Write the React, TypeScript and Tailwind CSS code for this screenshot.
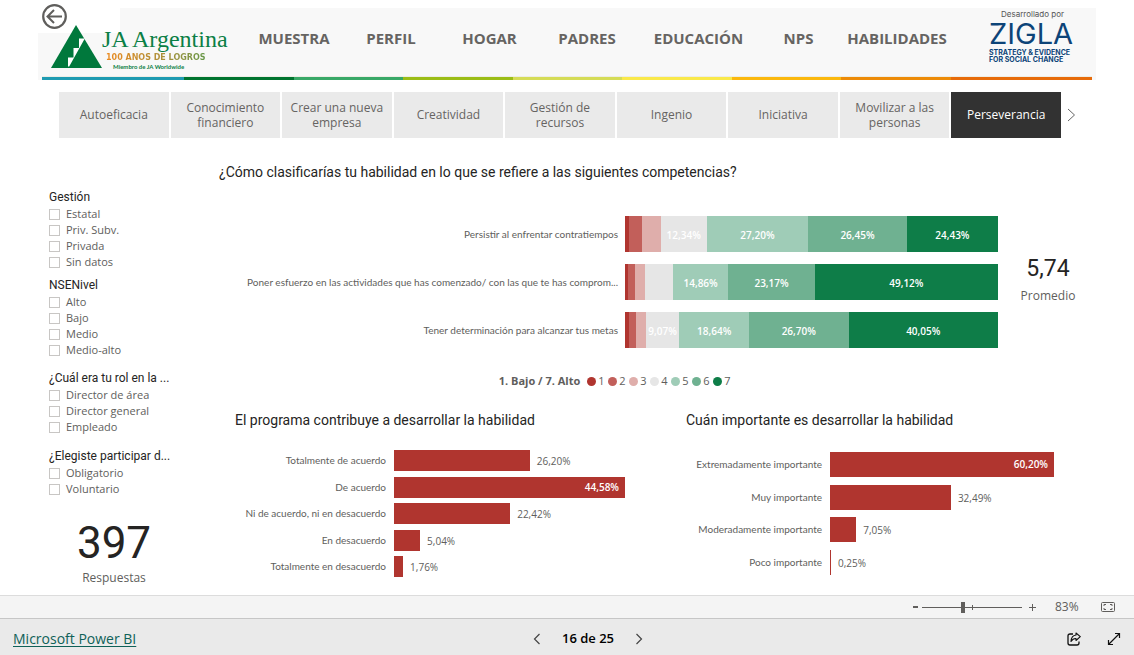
import { useState } from "react";

const UI = "font-['Open_Sans','Noto_Sans',sans-serif]";
const DIN = "font-[Roboto,sans-serif]";
const LABEL = "font-[Lato,sans-serif]";

const sections = ["MUESTRA", "PERFIL", "HOGAR", "PADRES", "EDUCACIÓN", "NPS", "HABILIDADES"];

const skills = [
  "Autoeficacia",
  "Conocimiento financiero",
  "Crear una nueva empresa",
  "Creatividad",
  "Gestión de recursos",
  "Ingenio",
  "Iniciativa",
  "Movilizar a las personas",
  "Perseverancia",
];

const scale = [
  "bg-[#b0352f]",
  "bg-[#c25f5a]",
  "bg-[#dfaeab]",
  "bg-[#e6e6e6]",
  "bg-[#9fccb7]",
  "bg-[#6fb191]",
  "bg-[#0e7d48]",
];

const competencies = [
  { label: "Persistir al enfrentar contratiempos", values: [1.01, 3.53, 5.04, 12.34, 27.2, 26.45, 24.43] },
  {
    label: "Poner esfuerzo en las actividades que has comenzado/ con las que te has comprom...",
    values: [0.76, 2.02, 2.51, 7.56, 14.86, 23.17, 49.12],
  },
  { label: "Tener determinación para alcanzar tus metas", values: [1.01, 2.01, 2.52, 9.07, 18.64, 26.7, 40.05] },
];

const contribution = [
  { label: "Totalmente de acuerdo", value: 26.2 },
  { label: "De acuerdo", value: 44.58 },
  { label: "Ni de acuerdo, ni en desacuerdo", value: 22.42 },
  { label: "En desacuerdo", value: 5.04 },
  { label: "Totalmente en desacuerdo", value: 1.76 },
];

const importance = [
  { label: "Extremadamente importante", value: 60.2 },
  { label: "Muy importante", value: 32.49 },
  { label: "Moderadamente importante", value: 7.05 },
  { label: "Poco importante", value: 0.25 },
];

const percent = (n: number) => n.toFixed(2).replace(".", ",") + "%";

function Logo() {
  return (
    <div className="flex w-[207px] shrink-0 items-start pt-[17px] pl-[13px]">
      <svg viewBox="0 0 51 44" className="h-[44px] w-[51px] shrink-0" aria-hidden="true">
        <path d="M25 0 L51 43 H0 Z" fill="#00783c" />
        <path d="M28 13.5 H33.8 L18.2 41.5 H17 V32.5 H22.5 V23 H28 Z" fill="#fff" />
      </svg>
      <div className="whitespace-nowrap">
        <div className="font-['Liberation_Serif',serif] text-[24px] leading-[28px] text-[#0b7f45]">JA Argentina</div>
        <div className="bg-linear-to-r from-[#f08a1d] via-[#a8903a] to-[#1f9a4f] bg-clip-text pl-1 font-['DejaVu_Sans',sans-serif] text-[8px] leading-[10px] font-bold text-transparent">
          100 AÑOS DE LOGROS
        </div>
        <div className="pl-[11px] font-[Lato,sans-serif] text-[6px] leading-[7px] font-bold text-[#0b7f45]">
          Miembro de JA Worldwide
        </div>
      </div>
    </div>
  );
}

function Header() {
  return (
    <header className="relative mx-[38px] mt-2 bg-[#f8f8f8]">
      <div className="absolute top-0 left-0 h-[25px] w-[82px] bg-white" />
      <button type="button" aria-label="Atrás" className="absolute -top-1 left-1">
        <svg viewBox="0 0 25 25" className="h-[25px] w-[25px]" fill="none" stroke="#5f5e5c">
          <circle cx="12.5" cy="12.5" r="11.3" strokeWidth="2.2" />
          <path d="M20 12.5 H5.5 M12 6 L5.5 12.5 L12 19" strokeWidth="2" />
        </svg>
      </button>
      <div className="pointer-events-none relative flex h-[68px]">
        <Logo />
        <nav
          className={`${UI} pointer-events-auto grid min-w-0 flex-1 grid-cols-[98fr_96fr_101fr_94fr_129fr_71fr_126fr] items-center pb-2 text-center text-[15px] font-bold text-[#666462]`}
        >
          {sections.map((s) => (
            <a key={s} href="#">
              {s}
            </a>
          ))}
        </nav>
        <div className="w-[136px] shrink-0 pl-[29px] font-[Inter,sans-serif] whitespace-nowrap text-[#0d4478]">
          <div className="pt-[2px] pl-3 text-[8px] leading-[9px] text-[#555]">Desarrollado por</div>
          <div className="text-[29px] leading-[30px]">ZIGLA</div>
          <div className="text-[7px] leading-[7px] font-bold">STRATEGY &amp; EVIDENCE</div>
          <div className="text-[7px] leading-[7px] font-bold">FOR SOCIAL CHANGE</div>
        </div>
      </div>
      <div className="mx-1 grid h-1 grid-cols-[142fr_110fr_109fr_110fr_109fr_110fr_109fr_110fr_141fr] border-t border-[#eeeee6]">
        <span className="bg-[#1f9bb2]" />
        <span className="bg-[#00742f]" />
        <span className="bg-[#38a867]" />
        <span className="bg-[#9bbd16]" />
        <span className="bg-[#d5dc56]" />
        <span className="bg-[#fae94a]" />
        <span className="bg-[#fbb80e]" />
        <span className="bg-[#ed8b08]" />
        <span className="bg-[#e76b0a]" />
      </div>
    </header>
  );
}

function SkillTabs() {
  const [active, setActive] = useState("Perseverancia");
  return (
    <div className={`${UI} mt-3 mr-[57px] ml-[59px] flex items-center gap-[5px]`}>
      <div className="grid min-w-0 flex-1 grid-cols-9 gap-[2px]">
        {skills.map((s) => (
          <button
            key={s}
            type="button"
            onClick={() => setActive(s)}
            className={
              s === active
                ? "h-[46px] bg-[#323232] px-1 pb-px text-[12px] leading-[15px] text-white"
                : "h-[46px] bg-[#eaeaea] px-1 pb-px text-[12px] leading-[15px] text-[#666462]"
            }
          >
            <span className="mx-auto block max-w-[96px]">{s}</span>
          </button>
        ))}
      </div>
      <button type="button" aria-label="Siguiente" className="w-[11px]">
        <svg viewBox="0 0 11 16" className="h-4 w-[11px]" fill="none" stroke="#666">
          <path d="M2 2 L8.5 8 L2 14" />
        </svg>
      </button>
    </div>
  );
}

function Slicer({ title, options, className = "" }: { title: string; options: string[]; className?: string }) {
  return (
    <fieldset className={className}>
      <legend className={`${DIN} h-[17px] text-[12px] leading-[16px] whitespace-nowrap text-[#252423]`}>{title}</legend>
      {options.map((o) => (
        <label key={o} className="flex h-4 items-center gap-[6px] text-[11px] text-[#605e5c]">
          <input type="checkbox" className="h-[11px] w-[11px] shrink-0 appearance-none border border-[#c8c6c4] bg-white checked:bg-[#323232]" />
          {o}
        </label>
      ))}
    </fieldset>
  );
}

function Sidebar() {
  return (
    <aside className={`${UI} w-[181px] shrink-0 pt-[51px] pl-[11px]`}>
      <Slicer title="Gestión" options={["Estatal", "Priv. Subv.", "Privada", "Sin datos"]} />
      <Slicer className="mt-[7px]" title="NSENivel" options={["Alto", "Bajo", "Medio", "Medio-alto"]} />
      <Slicer
        className="mt-3"
        title="¿Cuál era tu rol en la ..."
        options={["Director de área", "Director general", "Empleado"]}
      />
      <Slicer className="mt-[13px]" title="¿Elegiste participar d..." options={["Obligatorio", "Voluntario"]} />
      <div className="mt-5 w-[130px] text-center">
        <div className={`${DIN} text-[44px] leading-[52px] text-[#252423]`}>397</div>
        <div className="text-[12px] leading-[18px] text-[#605e5c]">Respuestas</div>
      </div>
    </aside>
  );
}

function StackedChart() {
  return (
    <div className="min-w-0 flex-1">
      <div className="flex flex-col gap-3">
        {competencies.map((c) => (
          <div key={c.label} className="grid grid-cols-[399fr_373fr] items-center gap-[7px]">
            <div className={`${LABEL} text-right text-[10px] whitespace-nowrap text-[#605e5c]`}>{c.label}</div>
            <div className="flex h-9">
              {c.values.map((v, i) => (
                <div
                  key={i}
                  style={{ width: `${v}%` }}
                  className={`${scale[i]} flex items-center justify-center pt-[2px] text-[10px] font-semibold text-white`}
                >
                  {v > 9 ? percent(v) : ""}
                </div>
              ))}
            </div>
          </div>
        ))}
      </div>
      <div className="mt-[25px] flex h-4 items-center justify-center pl-4 text-[11px] text-[#605e5c]">
        <span className="mr-[7px] font-bold">1. Bajo / 7. Alto</span>
        {scale.map((color, i) => (
          <span key={color} className="flex w-[21px] items-center gap-[2px]">
            <span className={`${color} h-[9px] w-[9px] rounded-full`} />
            {i + 1}
          </span>
        ))}
      </div>
    </div>
  );
}

function BarRows({
  data,
  rowClass,
  gridClass,
}: {
  data: { label: string; value: number }[];
  rowClass: string;
  gridClass: string;
}) {
  const max = Math.max(...data.map((d) => d.value));
  return (
    <>
      {data.map((d) => (
        <div key={d.label} className={`${gridClass} ${rowClass}`}>
          <div className={`${LABEL} mr-2 text-right text-[10px] whitespace-nowrap text-[#605e5c]`}>{d.label}</div>
          <div className="flex h-full items-center text-[10px]">
            <div
              style={{ width: `${(d.value / max) * 100}%` }}
              className="flex h-full min-w-px shrink-0 items-center justify-end bg-[#b0352f] font-semibold text-white"
            >
              {d.value === max && <span className="pr-[6px]">{percent(d.value)}</span>}
            </div>
            {d.value !== max && <span className="pt-[2px] pl-[7px] text-[#605e5c]">{percent(d.value)}</span>}
          </div>
        </div>
      ))}
    </>
  );
}

const titleClass = "font-[Roboto,sans-serif] text-[14px] leading-[20px] whitespace-nowrap text-[#252423]";

function Charts() {
  return (
    <main className={`${UI} min-w-0 flex-1 pt-6`}>
      <h2 className={titleClass}>¿Cómo clasificarías tu habilidad en lo que se refiere a las siguientes competencias?</h2>
      <div className="mt-[34px] flex">
        <StackedChart />
        <div className="w-[98px] shrink-0 pt-[38px] pl-[2px] text-center">
          <div className={`${DIN} text-[23px] leading-[30px] text-[#252423]`}>5,74</div>
          <div className="pt-[3px] text-[12px] leading-[18px] text-[#605e5c]">Promedio</div>
        </div>
      </div>
      <div className="mt-[21px] grid grid-cols-[451fr_426fr]">
        <section className="pl-4">
          <h2 className={titleClass}>El programa contribuye a desarrollar la habilidad</h2>
          <div className="mt-5 flex h-[127px] flex-col justify-between">
            <BarRows data={contribution} rowClass="h-[21px]" gridClass="grid grid-cols-[159fr_231fr_45fr] items-center" />
          </div>
        </section>
        <section className="pl-4">
          <h2 className={titleClass}>Cuán importante es desarrollar la habilidad</h2>
          <div className="mt-[22px] flex h-[123px] flex-col justify-between">
            <BarRows data={importance} rowClass="h-[25px]" gridClass="grid grid-cols-[144fr_224fr_42fr] items-center" />
          </div>
        </section>
      </div>
    </main>
  );
}

function ZoomBar() {
  return (
    <div className="flex h-[23px] items-center justify-end border-t border-[#dcdcdc] bg-[#f4f4f4] pr-[19px] text-[12px] text-[#605e5c]">
      <button type="button" aria-label="Alejar" className="w-[9px] text-left">
        <span className="block h-[2px] w-[5px] bg-[#605e5c]" />
      </button>
      <div className="relative flex w-[100px] items-center">
        <input
          type="range"
          aria-label="Zoom"
          min={10}
          max={190}
          defaultValue={83}
          className="h-3 w-full appearance-none bg-[linear-gradient(#605e5c,#605e5c)] bg-[length:100%_1px] bg-center bg-no-repeat [&::-webkit-slider-thumb]:h-[11px] [&::-webkit-slider-thumb]:w-1 [&::-webkit-slider-thumb]:appearance-none [&::-webkit-slider-thumb]:bg-[#605e5c]"
        />
        <span className="absolute left-1/2 h-[5px] w-px bg-[#605e5c]" />
      </div>
      <button type="button" aria-label="Acercar" className="ml-[6px]">
        <svg viewBox="0 0 9 9" className="h-[9px] w-[9px]" stroke="#605e5c">
          <path d="M1 4.5 H8 M4.5 1 V8" />
        </svg>
      </button>
      <span className="ml-[18px] w-6">83%</span>
      <button type="button" aria-label="Ajustar a la página" className="ml-[22px]">
        <svg viewBox="0 0 14 10" className="h-[10px] w-[14px]" fill="none" stroke="#605e5c">
          <rect x="0.5" y="0.5" width="13" height="9" rx="1" />
          <path d="M5 2.5 H3 V4 M3 6 V7.5 H5 M9 2.5 H11 V4 M11 6 V7.5 H9" />
        </svg>
      </button>
    </div>
  );
}

function Footer() {
  return (
    <footer className="grid h-[37px] grid-cols-[1fr_auto_1fr] items-center border-t border-[#c6c6c6] bg-[#eaeaea] px-[13px] pt-[3px]">
      <a href="#" className="justify-self-start text-[14px] text-[#0f6158] underline underline-offset-2">
        Microsoft Power BI
      </a>
      <div className="flex items-center pl-[42px] text-[13px] font-semibold text-black">
        <button type="button" aria-label="Página anterior">
          <svg viewBox="0 0 8 12" className="h-3 w-2" fill="none" stroke="#444" strokeWidth="1.2">
            <path d="M6.5 1 L1.5 6 L6.5 11" />
          </svg>
        </button>
        <span className="mx-[21px]">16 de 25</span>
        <button type="button" aria-label="Página siguiente">
          <svg viewBox="0 0 8 12" className="h-3 w-2" fill="none" stroke="#444" strokeWidth="1.2">
            <path d="M1.5 1 L6.5 6 L1.5 11" />
          </svg>
        </button>
      </div>
      <div className="flex items-center gap-[26px] justify-self-end">
        <button type="button" aria-label="Compartir">
          <svg viewBox="0 0 14 14" className="h-[14px] w-[14px]" fill="none" stroke="#111" strokeLinejoin="round">
            <path d="M6 2 H3 Q1 2 1 4 V11 Q1 13 3 13 H10 Q12 13 12 11 V9.5" strokeWidth="1.3" />
            <path d="M9 1 L13.3 4.7 L9 8.5 V6.5 Q6 6.3 4 9.5 Q4.3 3.6 9 3 Z" strokeWidth="1.1" />
          </svg>
        </button>
        <button type="button" aria-label="Pantalla completa">
          <svg viewBox="0 0 14 14" className="h-[14px] w-[14px]" fill="none" stroke="#111" strokeWidth="1.2">
            <path d="M1.5 12.5 L12.5 1.5 M8 1.5 H12.5 V6 M1.5 8 V12.5 H6" />
          </svg>
        </button>
      </div>
    </footer>
  );
}

export default function App() {
  return (
    <div className={`${UI} flex min-h-screen flex-col bg-white`}>
      <div className="flow-root flex-1">
        <Header />
        <SkillTabs />
        <div className="mx-[38px] flex">
          <Sidebar />
          <Charts />
        </div>
      </div>
      <ZoomBar />
      <Footer />
    </div>
  );
}
